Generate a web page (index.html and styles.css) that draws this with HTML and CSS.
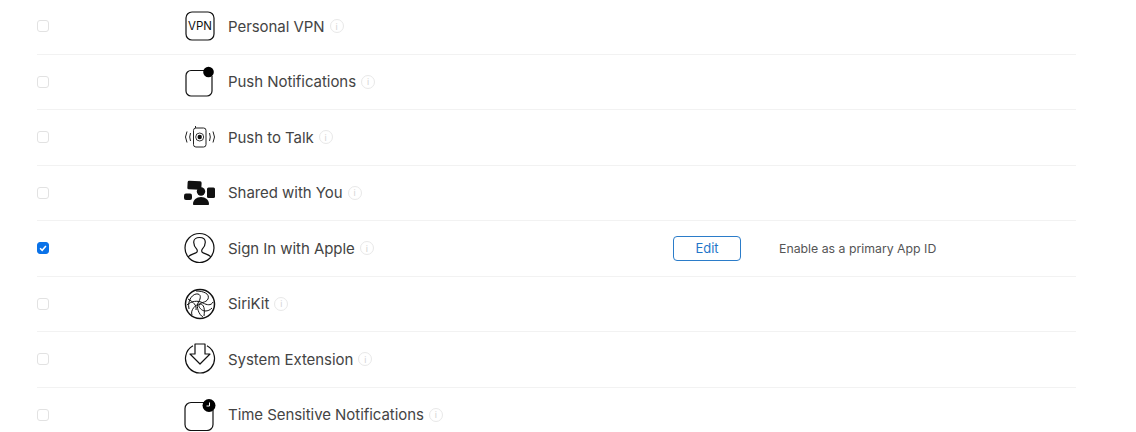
FILE: index.html
```html
<!DOCTYPE html>
<html lang="en">
<head>
    <title>Capabilities</title>
    <meta charset="UTF-8">
    <link rel="stylesheet" href="styles.css">
</head>
<body>

<ul class="caps">
    <li class="cap">
        <span class="box"></span>
        <span class="icon">
            <svg width="32" height="32" viewBox="0 0 32 32"><rect x="2" y="2" width="28" height="28" rx="6" fill="none" stroke="#111" stroke-width="1.2"/><text x="16" y="20.2" text-anchor="middle" class="vpn">VPN</text></svg>
        </span>
        <span class="name">Personal VPN</span>
        <span class="info">i</span>
    </li>
    <li class="cap">
        <span class="box"></span>
        <span class="icon">
            <svg width="32" height="32" viewBox="0 0 32 32"><path d="M20 4.500H7a5 5 0 0 0-5 5V25a5 5 0 0 0 5 5h16a5 5 0 0 0 5-5V10" fill="none" stroke="#111" stroke-width="1.2"/><circle cx="24.500" cy="6" r="5.300" fill="#000"/></svg>
        </span>
        <span class="name">Push Notifications</span>
        <span class="info">i</span>
    </li>
    <li class="cap">
        <span class="box"></span>
        <span class="icon">
            <svg width="32" height="32" viewBox="0 0 32 32" fill="none" stroke="#222"><rect x="9.500" y="7" width="12.500" height="19" rx="2.400" stroke-width="1"/><path d="M11.500 7V5" stroke-width="1"/><circle cx="15.700" cy="16" r="4" stroke-width=".9"/><circle cx="15.700" cy="16" r="2.200" fill="#111" stroke="none"/><path d="M6.500 12q-1.600 4 0 8M3 10.500q-3 5.500 0 11M25.500 12q1.600 4 0 8M29 10.500q3 5.500 0 11" stroke-width="1"/></svg>
        </span>
        <span class="name">Push to Talk</span>
        <span class="info">i</span>
    </li>
    <li class="cap">
        <span class="box"></span>
        <span class="icon">
            <svg width="32" height="32" viewBox="0 0 32 32" fill="#111"><rect x="3.500" y="4" width="14" height="8.500" rx="1.500" transform="rotate(3 10 8)"/><rect x="0" y="16.500" width="8" height="6.500" rx="2"/><rect x="23" y="10.500" width="8" height="10.500" rx="1.500"/><circle cx="17" cy="14.500" r="4.200"/><path d="M9 27c0-4 3.500-7 8-7s8 3 8 7c0 .7-.5 1-1 1H10c-.5 0-1-.3-1-1z"/></svg>
        </span>
        <span class="name">Shared with You</span>
        <span class="info">i</span>
    </li>
    <li class="cap">
        <span class="box checked">
            <svg width="12" height="12" viewBox="0 0 12 12"><path d="M2.500 6.300l2.500 2.500L9.500 3.500" fill="none" stroke="#fff" stroke-width="1.800"/></svg>
        </span>
        <span class="icon">
            <svg width="32" height="32" viewBox="0 0 32 32" fill="none" stroke="#111" stroke-width="1.200"><circle cx="15.500" cy="16" r="14.500"/><path d="M4 25c2-2.500 6-3 8.500-4.500 1-.6 1-2.300.2-3.300-1.700-2-3-4.500-3-7C9.700 7 12.500 5.500 15.500 5.500s5.800 1.500 5.800 4.700c0 2.500-1.300 5-3 7-.8 1-.8 2.700.2 3.300 2.500 1.500 6.500 2 8.500 4.500"/></svg>
        </span>
        <span class="name">Sign In with Apple</span>
        <span class="info">i</span>
        <button class="edit">Edit</button>
        <span class="note">Enable as a primary App ID</span>
    </li>
    <li class="cap">
        <span class="box"></span>
        <span class="icon">
            <svg width="32" height="32" viewBox="0 0 32 32" fill="none" stroke="#111" stroke-width="1"><circle cx="16" cy="16" r="14.500" stroke-width="1.500"/><path d="M5 21C3 12 9 5 14 6c4 1 2 6 0 9-2 4 1 12 5 14"/><path d="M3 17c4-4 11-5 16-2 4 2 8 3 10-1"/><path d="M8 27c-2-5 4-11 8-11s5 5 4 12"/><path d="M12 3c8 0 14 3 12 8-2 4-8 3-9 6-1 2 3 6 6 6 3 0 5-1 7-3"/><path d="M4 11c5 3 9 6 8 11"/></svg>
        </span>
        <span class="name">SiriKit</span>
        <span class="info">i</span>
    </li>
    <li class="cap">
        <span class="box"></span>
        <span class="icon">
            <svg width="32" height="32" viewBox="0 0 32 32" fill="none" stroke="#111" stroke-width="1.200"><path d="M9 2.800A14.500 14.500 0 1 0 23 2.800"/><path d="M11 1h10v10h5L16 21 6 11h5z" stroke-linejoin="round"/></svg>
        </span>
        <span class="name">System Extension</span>
        <span class="info">i</span>
    </li>
    <li class="cap">
        <span class="box"></span>
        <span class="icon">
            <svg width="32" height="32" viewBox="0 0 32 32"><path d="M20 3.500H7a6 6 0 0 0-6 6V25.500a6 6 0 0 0 6 6h16a6 6 0 0 0 6-6V11" fill="none" stroke="#111" stroke-width="1.2"/><circle cx="25" cy="6.500" r="6.500" fill="#000"/><path d="M25.500 3.500v3.500h-3" fill="none" stroke="#fff" stroke-width="1"/></svg>
        </span>
        <span class="name">Time Sensitive Notifications</span>
        <span class="info">i</span>
    </li>
</ul>

</body>
</html>
```

FILE: styles.css
```css
* {
  box-sizing: border-box;
}

body {
  margin: 0;
  background: #fff;
  font-family: Inter, "Liberation Sans", sans-serif;
  color: #333;
  overflow: hidden;
}

.caps {
  list-style: none;
  margin: -1px 60px 0 37px;
  padding: 0;
}

.cap {
  display: flex;
  align-items: center;
  height: 55.5px;
  border-bottom: 1px solid #f2f2f2;
}

.box {
  flex: none;
  width: 12px;
  height: 12px;
  margin-right: 135px;
  border: 1px solid #e2e2e2;
  border-radius: 3px;
}

.box.checked {
  display: flex;
  align-items: center;
  justify-content: center;
  background: #0a72e8;
  border-color: #0a72e8;
}

.icon {
  flex: none;
  display: flex;
  width: 32px;
  height: 32px;
  margin-right: 12px;
}

.name {
  font-size: 15px;
  letter-spacing: -0.05px;
  color: #444;
}

.info {
  flex: none;
  display: flex;
  align-items: center;
  justify-content: center;
  width: 14px;
  height: 14px;
  margin-left: 5px;
  border: 1px solid #e8e8e8;
  border-radius: 50%;
  font-size: 9px;
  color: #d4d4d4;
}

.vpn {
  font-size: 11.5px;
  font-family: Inter, sans-serif;
  fill: #111;
}

.edit {
  width: 68px;
  height: 25px;
  margin-left: auto;
  padding: 0;
  background: #fff;
  border: 1px solid #2b7cc9;
  border-radius: 4px;
  font: 13px Inter, sans-serif;
  color: #1f76c9;
}

.note {
  width: 297px;
  margin-left: 38px;
  font-size: 12.3px;
  color: #555;
}
```
